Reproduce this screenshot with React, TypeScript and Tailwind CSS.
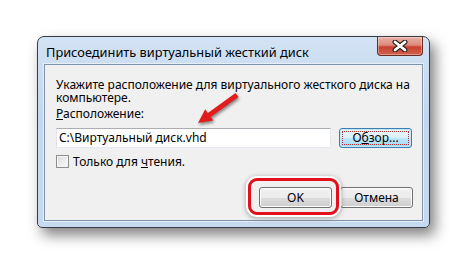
import React from "react";

function Btn({
  children,
  active,
}: {
  children: React.ReactNode;
  active?: boolean;
}) {
  return active ? (
    <button className="relative h-[20px] w-[73px] rounded-[3px] border border-[#3c7fb1] bg-[linear-gradient(#eaf6fd_0%,#d9f0fc_50%,#bee6fd_51%,#a7d9f5_100%)] text-[#000] shadow-[inset_0_0_0_1px_#c4e5f6]">
      <span className="absolute inset-[2px] border border-dotted border-[#a33]" />
      {children}
    </button>
  ) : (
    <button className="h-[21px] w-[73px] rounded-[3px] border border-[#707070] bg-[linear-gradient(#f2f2f2_0%,#ebebeb_50%,#dddddd_51%,#cfcfcf_100%)] text-[#000] shadow-[inset_0_0_0_1px_#fcfcfc]">
      {children}
    </button>
  );
}

function CloseX() {
  return (
    <svg width="16" height="12" viewBox="0 0 16 12">
      <path d="M3 2 L13 10 M13 2 L3 10" stroke="#2e2626" strokeWidth="5" strokeLinecap="round" />
      <path d="M3 2 L13 10 M13 2 L3 10" stroke="#ffffff" strokeWidth="2.8" strokeLinecap="round" />
    </svg>
  );
}

export default function App() {
  return (
    <div
      className="relative h-[266px] w-[468px] overflow-hidden bg-white pl-[37px] pt-[36px] text-[12px] text-black"
      style={{ fontFamily: '"Noto Sans", "DejaVu Sans", sans-serif' }}
    >
      {/* window */}
      <div className="flex h-[192px] w-[393px] flex-col rounded-t-[7px] rounded-b-[5px] border border-[#383d45] bg-[linear-gradient(#d3e2f4,#c3d7ee_40%,#c6d9ef)] shadow-[5px_7px_14px_rgba(0,0,0,0.5)]">
        <div className="flex h-[27px] shrink-0 items-start">
          <span className="pl-[8px] pt-[8px] text-[12.8px] leading-[14px]">
            Присоединить виртуальный жесткий диск
          </span>
          <div className="ml-auto mr-[6px] flex h-[19px] w-[46px] items-center justify-center rounded-b-[4px] border border-t-0 border-[#6b2a22] bg-[linear-gradient(#eab0a4_0%,#dd8a7a_45%,#c8412f_55%,#d0614b_100%)] shadow-[inset_0_0_0_1px_rgba(255,255,255,0.35)]">
            <CloseX />
          </div>
        </div>

        <div className="mx-[6px] mb-[6px] flex flex-1 flex-col border border-[#7f93aa] bg-[#f0f0f0] pl-[11px] pr-[9px] pt-[13px] shadow-[0_0_0_1px_#e6eef8]">
          <p className="leading-[13px]">
            Укажите расположение для виртуального жесткого диска на компьютере.
          </p>
          <div className="mt-[3px] leading-[13px]">
            <span className="underline">Р</span>асположение:
          </div>
          <div className="mt-[8px] flex gap-[8px]">
            <div className="flex h-[20px] w-[275px] items-center border border-[#abadb3] border-r-[#e3e9ef] border-b-[#e3e9ef] border-l-[#e2e3ea] bg-white pl-[2px]">
              C:\Виртуальный диск.vhd
            </div>
            <Btn active>
              О<span className="underline">б</span>зор...
            </Btn>
          </div>
          <label className="mt-[7px] flex items-center gap-[4px] leading-[13px]">
            <span className="h-[13px] w-[13px] border border-[#8e8f8f] bg-[linear-gradient(135deg,#dcdcdc,#fbfbfb)] shadow-[inset_0_0_0_1px_#f4f4f4]" />
            <span>
              Только для <span className="underline">ч</span>тения.
            </span>
          </label>
          <div className="mt-auto mb-[12px] flex justify-end gap-[8px]">
            <div className="relative">
              <Btn>OK</Btn>
              <span className="pointer-events-none absolute -left-[11px] -right-[7px] -top-[9px] -bottom-[7px] rounded-[9px] border-[3.5px] border-[#e3101c] shadow-[0_0_0_2px_#ffffff,0_1px_5px_2px_rgba(0,0,0,0.35)]" />
            </div>
            <Btn>Отмена</Btn>
          </div>
        </div>
      </div>

      {/* red arrow */}
      <svg
        className="absolute left-[192px] top-[90px] drop-shadow-[1px_2px_1.5px_rgba(0,0,0,0.45)]"
        width="50"
        height="40"
        viewBox="0 0 50 40"
      >
        <polygon
          points="6,33 21.4,30.6 18.75,26.9 46.45,7 43.55,3 15.85,22.9 13.2,19.2"
          fill="#e21c1c"
        />
      </svg>
    </div>
  );
}
